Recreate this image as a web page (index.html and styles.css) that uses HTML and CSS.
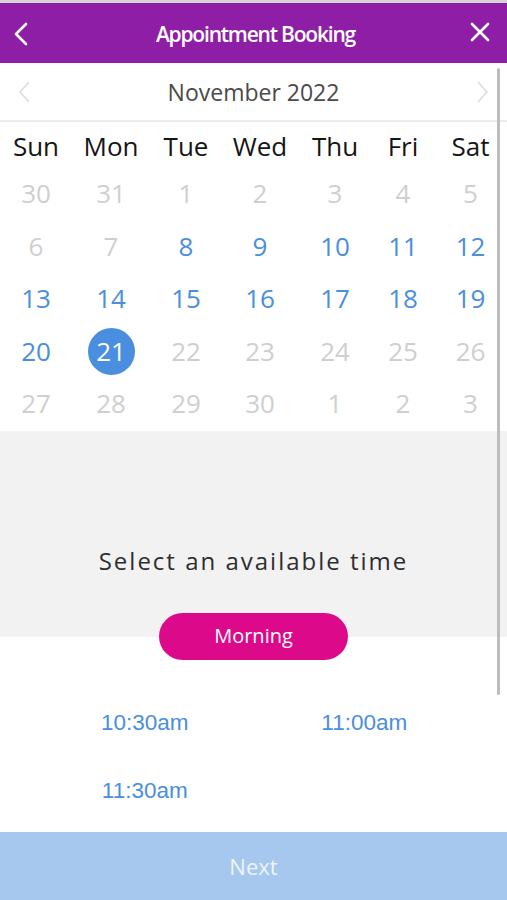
FILE: index.html
```html
<!DOCTYPE html>
<html lang="en">
<head>
<meta charset="utf-8">
<title>Appointment Booking</title>
<link rel="stylesheet" href="styles.css">
</head>
<body>
<div class="app">
  <div class="topline"></div>
  <header class="header">
    <svg class="hicon back" width="20" height="26" viewBox="0 0 20 26"><path d="M14 3 L4 13 L14 23" fill="none" stroke="#fff" stroke-width="2.6" stroke-linecap="round" stroke-linejoin="round"/></svg>
    <h1 class="title">Appointment Booking</h1>
    <svg class="hicon close" width="22" height="22" viewBox="0 0 22 22"><path d="M3 3 L19 19 M19 3 L3 19" fill="none" stroke="#fff" stroke-width="2.6" stroke-linecap="round"/></svg>
  </header>
  <main class="content">
    <div class="month">
      <svg class="mchev" width="14" height="22" viewBox="0 0 14 22"><path d="M11 1 L2 11 L11 21" fill="none" stroke="#dcdcdc" stroke-width="1.6"/></svg>
      <span class="month-name">November 2022</span>
      <svg class="mchev" width="14" height="22" viewBox="0 0 14 22"><path d="M3 1 L12 11 L3 21" fill="none" stroke="#dcdcdc" stroke-width="1.6"/></svg>
    </div>
    <div class="cal dow">
      <span>Sun</span><span>Mon</span><span>Tue</span><span>Wed</span><span>Thu</span><span>Fri</span><span>Sat</span>
    </div>
    <div class="cal dates">
      <span class="off">30</span><span class="off">31</span><span class="off">1</span><span class="off">2</span><span class="off">3</span><span class="off">4</span><span class="off">5</span>
      <span class="off">6</span><span class="off">7</span><span class="on">8</span><span class="on">9</span><span class="on">10</span><span class="on">11</span><span class="on">12</span>
      <span class="on">13</span><span class="on">14</span><span class="on">15</span><span class="on">16</span><span class="on">17</span><span class="on">18</span><span class="on">19</span>
      <span class="on">20</span><span class="sel"><b>21</b></span><span class="off">22</span><span class="off">23</span><span class="off">24</span><span class="off">25</span><span class="off">26</span>
      <span class="off">27</span><span class="off">28</span><span class="off">29</span><span class="off">30</span><span class="off">1</span><span class="off">2</span><span class="off">3</span>
    </div>
    <section class="select">
      <p class="select-text">Select an available time</p>
    </section>
    <div class="pill">Morning</div>
    <div class="times">
      <span>10:30am</span><span>11:00am</span>
      <span>11:30am</span><span></span>
    </div>
    <div class="scrollbar"></div>
  </main>
  <footer class="next">Next</footer>
</div>
</body>
</html>
```
FILE: styles.css
```css
* { box-sizing: border-box; }
html, body { margin: 0; padding: 0; background: #fff; }
body { font-family: "Open Sans", "Noto Sans", sans-serif; }
.app { width: 507px; height: 900px; display: flex; flex-direction: column; overflow: hidden; }
.topline { height: 3px; background: #d4d4d4; flex: none; }
.header { height: 60px; flex: none; background: #8f1ea7; display: flex; align-items: center; justify-content: space-between; padding: 0 16px 0 12px; }
.hicon { display: block; }
.back { margin-top: 1px; }
.close { margin-top: -2px; }
.title { margin: 0; color: #fff; font-size: 21px; font-weight: 600; letter-spacing: -1.2px; padding-left: 10px; margin-top: 2px; }
.content { flex: 1; position: relative; overflow: hidden; }
.month { height: 59px; border-bottom: 2px solid #ececec; display: flex; align-items: center; justify-content: space-between; padding: 0 18px 0 18px; }
.month-name { font-size: 23px; color: #4a4a4a; }
.cal { display: grid; grid-template-columns: 72px 78px 72px 76px 74px 62px 73px; text-align: center; }
.dow { height: 45px; padding-top: 4px; line-height: 40px; font-size: 26px; color: #151515; }
.dates { grid-auto-rows: 52.6px; line-height: 52.6px; font-size: 26px; }
.off { color: #cfcfcf; }
.on { color: #4a8ee0; }
.sel { display: flex; align-items: center; justify-content: center; }
.sel b { font-weight: 400; display: block; width: 47px; height: 47px; line-height: 47px; border-radius: 50%; background: #4a8ee0; color: #fff; }
.select { background: #f2f2f2; height: 206px; padding-top: 114px; margin-top: 1px; }
.select-text { margin: 0; text-align: center; font-size: 24px; line-height: 32px; letter-spacing: 2px; color: #2e2e2e; }
.pill { position: relative; width: 189px; height: 47px; margin: -24px auto 0; border-radius: 24px; background: #dc0a8a; color: #fff; font-size: 20px; line-height: 46px; text-align: center; }
.times { display: grid; grid-template-columns: 1fr 1fr; grid-auto-rows: 68px; padding: 0 33px 0 35px; margin-top: 29px; font-family: "Liberation Sans", Arial, sans-serif; font-size: 22.5px; color: #4a8ee0; text-align: center; line-height: 68px; }
.scrollbar { position: absolute; left: 497px; top: 5px; width: 3px; height: 627px; background: #bdbdbd; border-radius: 2px; }
.next { height: 68px; flex: none; background: #a6c8ee; color: #eef4fc; font-size: 22px; line-height: 68px; text-align: center; }
```
